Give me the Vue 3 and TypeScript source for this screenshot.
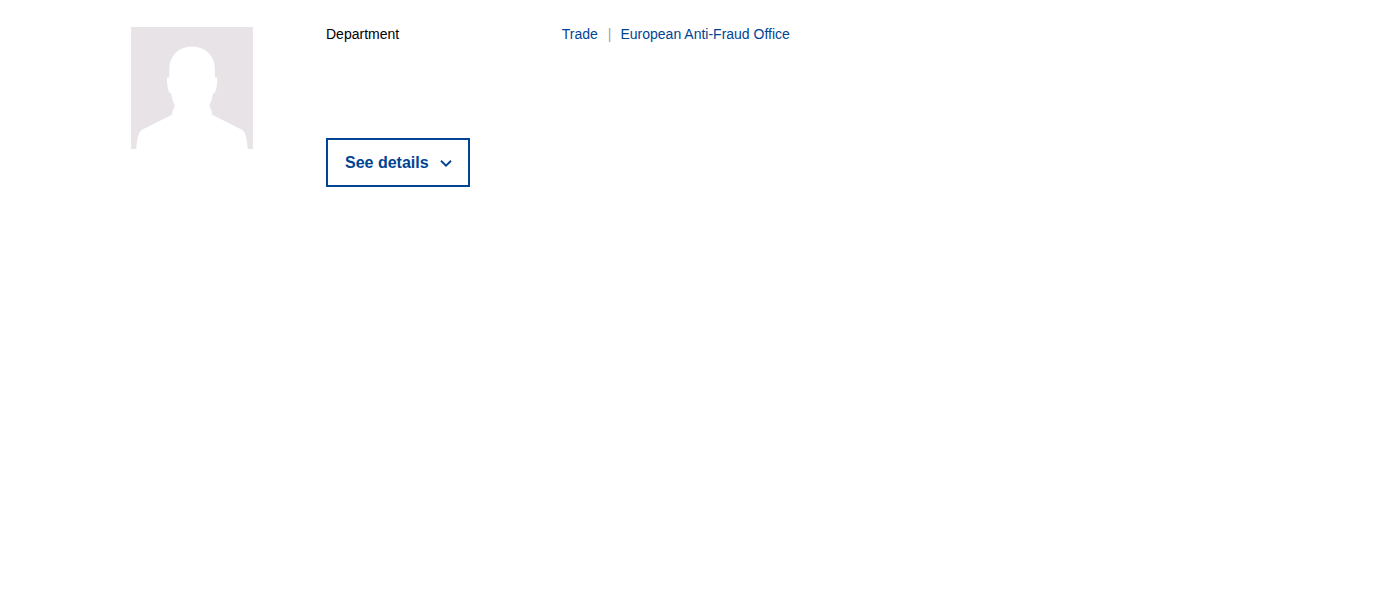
<script setup lang="ts">
import { ref } from 'vue'

interface Department {
  name: string
  href: string
}

const departments: Department[] = [
  { name: 'Trade', href: '#trade' },
  { name: 'European Anti-Fraud Office', href: '#anti-fraud' },
]

const expanded = ref(false)
</script>

<template>
  <article class="person">
    <svg class="avatar" viewBox="0 0 122 122" role="img" aria-label="Portrait placeholder">
      <rect width="122" height="122" fill="#e7e3e7" />
      <path
        fill="#fff"
        d="M5.300 122C5.700 115 6.500 106 10.500 103C13 101.500 16 100.500 19 98.800L41 87.700C41.200 84 42 81.500 43.500 80.500V77.500C41.500 74 40.600 70 40.400 66.500C38.500 66.500 37.800 65 37.200 62.500C36.200 58.500 35.700 54 36 51C36.400 50.200 37.400 50 38.300 50.200V42.500C38.300 28.500 48 19.500 61 19.500C74 19.500 83.900 28.500 83.900 42.500V50.200C84.800 50 85.800 50.200 86.200 51C86.500 54 86 58.500 85 62.500C84.400 65 83.700 66.500 81.800 66.500C81.600 70 80.700 74 78.700 77.500V80.500C80.200 81.500 81 84 81.200 87.700L103 98.800C106 100.500 109 101.500 111.500 103C115.500 106 116.300 115 116.700 122Z"
      />
    </svg>
    <div class="content">
      <dl class="facts">
        <dt>Department</dt>
        <dd>
          <ul class="links">
            <li v-for="item in departments" :key="item.name">
              <a :href="item.href">{{ item.name }}</a>
            </li>
          </ul>
        </dd>
      </dl>
      <button class="toggle" type="button" :aria-expanded="expanded" @click="expanded = !expanded">
        <span>See details</span>
        <svg class="chevron" :class="{ open: expanded }" viewBox="0 0 12 12" aria-hidden="true">
          <path d="M1 3.800L6 8.600L11 3.800" fill="none" stroke="currentColor" stroke-width="1.900" />
        </svg>
      </button>
    </div>
  </article>
</template>

<style>
body {
  background: #fff;
}
</style>

<style scoped>
.person {
  display: grid;
  grid-template-columns: 122px 1fr;
  column-gap: 73px;
  align-items: start;
  box-sizing: border-box;
  max-width: 1138px;
  margin: 0 auto;
  padding-top: 24px;
  font-family: "Liberation Sans", Arial, sans-serif;
  font-size: 14px;
  line-height: 20px;
  color: #000;
}

.avatar {
  display: block;
  width: 122px;
  height: 122px;
  margin-top: 3px;
}

.facts {
  display: grid;
  grid-template-columns: 1fr 3fr;
  margin: 0 0 94px;
}

.facts dd {
  margin: 0;
}

.links {
  display: flex;
  flex-wrap: wrap;
  margin: 0;
  padding: 0;
  list-style: none;
}

.links li + li::before {
  content: "|";
  margin: 0 9px 0 10px;
  color: #9f9f9f;
}

.links a {
  color: #004494;
  text-decoration: none;
}

.links a:hover {
  text-decoration: underline;
}

.toggle {
  display: inline-flex;
  align-items: center;
  gap: 11px;
  padding: 12px 16px 12px 17px;
  border: 2px solid #004494;
  background: #fff;
  color: #004494;
  font: bold 16px/21px "Liberation Sans", Arial, sans-serif;
  cursor: pointer;
}

.chevron {
  width: 12px;
  height: 12px;
}

.chevron.open {
  transform: rotate(180deg);
}
</style>
